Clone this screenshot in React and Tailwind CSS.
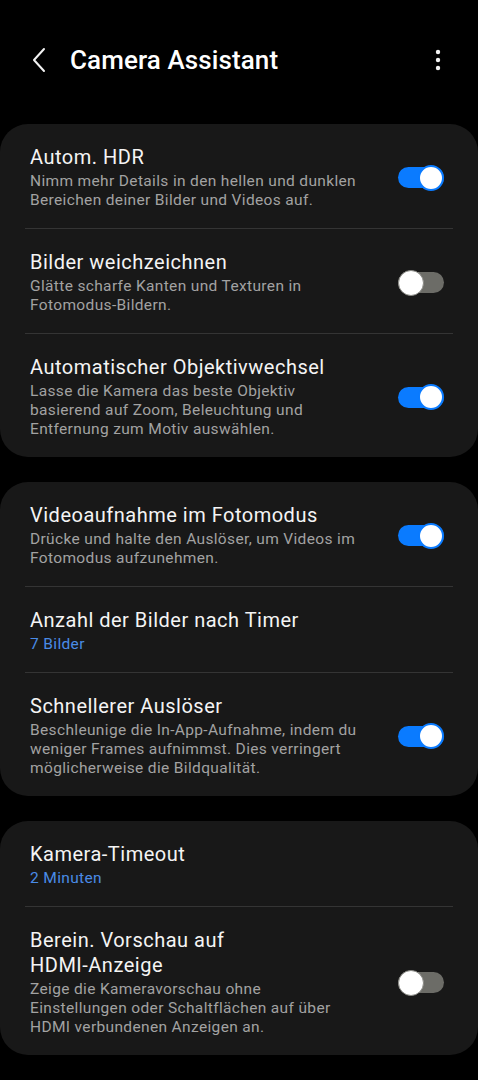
import React from 'react';

const SECTIONS = [
    [
        { title: 'Autom. HDR', desc: 'Nimm mehr Details in den hellen und dunklen Bereichen deiner Bilder und Videos auf.', toggle: true },
        { title: 'Bilder weichzeichnen', desc: 'Glätte scharfe Kanten und Texturen in Fotomodus-Bildern.', toggle: false },
        { title: 'Automatischer Objektivwechsel', desc: 'Lasse die Kamera das beste Objektiv basierend auf Zoom, Beleuchtung und Entfernung zum Motiv auswählen.', toggle: true },
    ],
    [
        { title: 'Videoaufnahme im Fotomodus', desc: 'Drücke und halte den Auslöser, um Videos im Fotomodus aufzunehmen.', toggle: true },
        { title: 'Anzahl der Bilder nach Timer', value: '7 Bilder' },
        { title: 'Schnellerer Auslöser', desc: 'Beschleunige die In-App-Aufnahme, indem du weniger Frames aufnimmst. Dies verringert möglicherweise die Bildqualität.', toggle: true },
    ],
    [
        { title: 'Kamera-Timeout', value: '2 Minuten' },
        { title: <>Berein. Vorschau auf<br />HDMI-Anzeige</>, desc: 'Zeige die Kameravorschau ohne Einstellungen oder Schaltflächen auf über HDMI verbundenen Anzeigen an.', toggle: false },
    ],
];

const Toggle = ({ on }) => (
    <div className="relative w-[46px] h-[26px] shrink-0">
        <div className={`absolute left-0 right-0 top-[2.5px] h-[21px] rounded-full ${on ? 'bg-[#0a7bff]' : 'bg-[#6c6c67]'}`} />
        <div
            className={`absolute top-0 w-[26px] h-[26px] rounded-full bg-white ${on ? 'right-0 border-2 border-[#0a7bff]' : 'left-0 border border-[#8a8a85]'}`}
        />
    </div>
);

const Row = ({ item }) => (
    <div className="flex items-center pl-[30px] pr-[34px] pt-[21px] pb-[18px]">
        <div className="w-[330px] min-w-0">
            <div className="text-[20px] leading-[25px] tracking-[0.5px] text-[#f4f4f4]">{item.title}</div>
            {item.desc && (
                <div className="mt-[2px] text-[15.5px] leading-[19px] tracking-[0.35px] text-[#a2a2a2]">{item.desc}</div>
            )}
            {item.value && (
                <div className="mt-[2px] text-[15.5px] leading-[19px] tracking-[0.35px] text-[#4a8be6]">{item.value}</div>
            )}
        </div>
        <div className="flex-1" />
        {item.toggle !== undefined && <Toggle on={item.toggle} />}
    </div>
);

export default function App() {
    return (
        <div className="min-h-[1080px] bg-black pb-6" style={{ fontFamily: 'Roboto, "Noto Sans", sans-serif' }}>
            {/* header */}
            <div className="flex items-center h-[120px] pl-[32px] pr-[37px]">
                <svg width="14" height="26" viewBox="0 0 14 26" className="shrink-0">
                    <path d="M12 2 L2 13 L12 24" fill="none" stroke="#f2f2f2" strokeWidth="2" strokeLinecap="round" strokeLinejoin="round" />
                </svg>
                <h1 className="ml-[24px] text-[26px] font-medium text-white tracking-[0.1px]">Camera Assistant</h1>
                <div className="flex-1" />
                <svg width="6" height="22" viewBox="0 0 6 22">
                    <circle cx="3" cy="3" r="2.2" fill="#f2f2f2" />
                    <circle cx="3" cy="11" r="2.2" fill="#f2f2f2" />
                    <circle cx="3" cy="19" r="2.2" fill="#f2f2f2" />
                </svg>
            </div>

            <div className="flex flex-col gap-[25px] mt-1">
                {SECTIONS.map((rows, i) => (
                    <div key={i} className="bg-[#181818] rounded-[28px]">
                        {rows.map((item, j) => (
                            <div key={j}>
                                {j > 0 && <div className="mx-[25px] h-px bg-[#343434]" />}
                                <Row item={item} />
                            </div>
                        ))}
                    </div>
                ))}
            </div>
        </div>
    );
}
